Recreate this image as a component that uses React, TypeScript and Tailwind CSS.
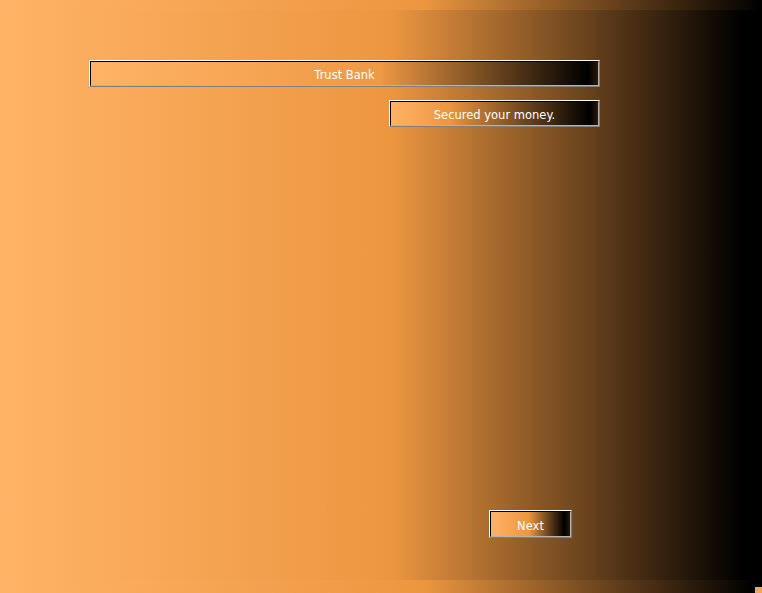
import React from "react";

function Bevel({
  className,
  grad,
  children,
}: {
  className: string;
  grad: string;
  children: React.ReactNode;
}) {
  return (
    <div className={`border-t border-l border-t-white border-l-white border-b border-r border-b-[#7f7f7f] border-r-[#7f7f7f] ${className}`}>
      <div
        className={`h-full w-full border-t border-l border-t-black border-l-black border-b border-r border-b-[#b4b4b4] border-r-[#b4b4b4] flex items-center justify-center pt-[5px] text-white text-[11.5px] ${grad}`}
        style={{ fontFamily: '"DejaVu Sans", Verdana, sans-serif' }}
      >
        {children}
      </div>
    </div>
  );
}

export default function App() {
  return (
    <div className="w-[762px] h-[593px] overflow-hidden flex flex-col bg-black">
      <div className="h-[10px] w-full bg-[linear-gradient(to_right,#ffb366_0px,#ec9640_423px,#000_762px)]" />
      <div className="h-[570px] w-full flex flex-col items-start bg-[linear-gradient(to_right,#ffb366_0px,#ec9640_392px,#000_742px)]">
        <Bevel
          className="ml-[89px] mt-[50px] w-[511px] h-[27px]"
          grad="bg-[linear-gradient(to_right,#ffb366_0%,#ee9944_57%,#000_98%,#2b1a0a_100%)]"
        >
          Trust Bank
        </Bevel>
        <Bevel
          className="ml-[389px] mt-[13px] w-[211px] h-[27px]"
          grad="bg-[linear-gradient(to_right,#ffb366_0%,#ec9640_28%,#000_96%,#2b1a0a_100%)]"
        >
          Secured your money.
        </Bevel>
        <Bevel
          className="ml-[489px] mt-[383px] w-[83px] h-[28px]"
          grad="bg-[linear-gradient(to_right,#ffb366_0%,#ec9640_48%,#000_93%,#2b1a0a_100%)]"
        >
          Next
        </Bevel>
      </div>
      <div className="h-[13px] w-full flex bg-[linear-gradient(to_right,#ffb366_0px,#ec9640_423px,#000_753px)]">
        <div className="flex-1" />
        <div className="w-[7px] flex flex-col">
          <div className="h-[7px] bg-black" />
          <div className="flex-1 bg-[#f2a55a]" />
        </div>
      </div>
    </div>
  );
}
